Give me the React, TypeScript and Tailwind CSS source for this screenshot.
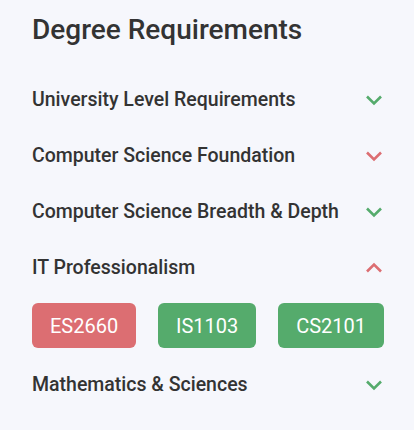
import { useState } from "react";

type Status = "done" | "missing";

type Section = {
  title: string;
  status: Status;
  modules?: { code: string; status: Status }[];
};

const sections: Section[] = [
  { title: "University Level Requirements", status: "done" },
  { title: "Computer Science Foundation", status: "missing" },
  { title: "Computer Science Breadth & Depth", status: "done" },
  {
    title: "IT Professionalism",
    status: "missing",
    modules: [
      { code: "ES2660", status: "missing" },
      { code: "IS1103", status: "done" },
      { code: "CS2101", status: "done" },
    ],
  },
  { title: "Mathematics & Sciences", status: "done" },
];

function Chevron({ open, status }: { open: boolean; status: Status }) {
  return (
    <svg
      width="18"
      height="12"
      viewBox="0 0 18 12"
      fill="none"
      className={status === "done" ? "text-[#55ab6c]" : "text-[#dc6e72]"}
    >
      <polyline
        points={open ? "2,9.5 9,2.5 16,9.5" : "2,2.5 9,9.5 16,2.5"}
        stroke="currentColor"
        strokeWidth="2.6"
      />
    </svg>
  );
}

export default function App() {
  const [openIdx, setOpenIdx] = useState<number | null>(3);

  return (
    <div className="min-h-screen bg-[#f6f7fc] px-8 pt-[13px] font-['Roboto',sans-serif] text-[#333333]">
      <h1 className="mb-[25px] text-[28px] leading-[34px] font-medium">
        Degree Requirements
      </h1>
      {sections.map((s, i) => {
        const open = openIdx === i;
        return (
          <div key={s.title}>
            <button
              className="flex h-[56px] w-full items-center justify-between text-left"
              onClick={() => setOpenIdx(open ? null : i)}
            >
              <span className="text-[19.5px] font-medium">{s.title}</span>
              <span className="-mr-[1px]">
                <Chevron open={open} status={s.status} />
              </span>
            </button>
            {open && s.modules && (
              <div className="-mr-[2px] flex justify-between pt-[7px] pb-[9px]">
                {s.modules.map((m) => (
                  <span
                    key={m.code}
                    className={`flex h-[45px] items-center rounded-[6px] px-[18px] text-[20px] text-white ${
                      m.status === "done" ? "bg-[#55ab6c]" : "bg-[#dc6e72]"
                    }`}
                  >
                    {m.code}
                  </span>
                ))}
              </div>
            )}
          </div>
        );
      })}
    </div>
  );
}
